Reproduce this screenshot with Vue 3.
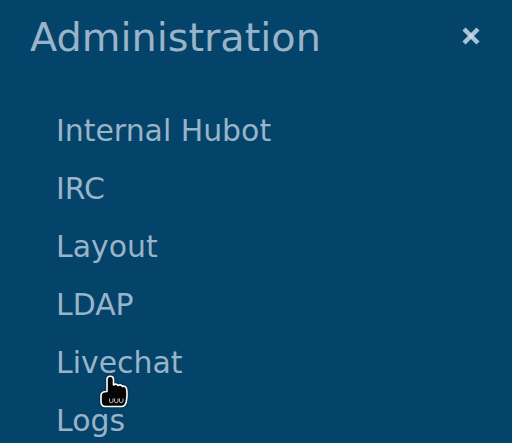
<template>
  <div class="panel">
    <header class="head">
      <h1 class="title">Administration</h1>
      <button class="close" aria-label="Close">
        <svg width="20" height="20" viewBox="0 0 20 20"><path d="M3 3 17 17M17 3 3 17" stroke="#a9c3d6" stroke-width="4.500" fill="none"/><circle cx="10" cy="10" r="2.500" fill="#c5d8e4"/></svg>
      </button>
    </header>
    <ul class="list">
      <li v-for="item in items" :key="item" class="item">{{ item }}</li>
    </ul>
    <svg class="cursor" width="40" height="40" viewBox="0 0 40 40">
      <path d="M11 9.500a3.250 3.250 0 0 1 6.500 0V15c1.500-1 3.500-.8 4.500.5 1.500-.8 3.500-.5 4.500 1 1.500-.8 3.500 0 4 2 .6 3 .6 9-.3 13.500-.6 2.500-2 4.500-4.500 4.500H9.500c-3.500 0-4.500-2-4.500-5v-6c0-2.500 2.500-4 6-4Z" fill="#050505" stroke="#fff" stroke-width="1.600" stroke-linejoin="round"/>
      <path d="M13.500 28.500v2.500a1.200 1.200 0 0 0 3.500 0v-2.500M18.500 28.500v2.500a1.200 1.200 0 0 0 3.500 0v-2.500M23.500 28.500v2.500a1.200 1.200 0 0 0 3.500 0v-2.500" stroke="#b5b5b5" stroke-width="1" fill="none"/>
    </svg>
  </div>
</template>

<script setup>
const items = ['Internal Hubot', 'IRC', 'Layout', 'LDAP', 'Livechat', 'Logs']
</script>

<style>
html, body { margin: 0; background: #04436a; overflow: hidden; }
</style>

<style scoped>
.panel {
  position: relative;
  width: 512px;
  height: 443px;
  overflow: hidden;
  background: #04436a;
  color: #99b4c8;
  font-family: "DejaVu Sans", sans-serif;
}
.head {
  display: flex;
  align-items: center;
  justify-content: space-between;
  padding: 13px 31px 0 30px;
  height: 48px;
}
.title {
  margin: 0;
  font-size: 39.750px;
  font-weight: 400;
  line-height: 48px;
}
.close {
  display: flex;
  padding: 0;
  border: 0;
  margin-bottom: 2px;
  background: none;
}
.list {
  list-style: none;
  margin: 0;
  padding: 41px 0 0 56px;
}
.item {
  font-size: 29.900px;
  line-height: 58px;
}
.cursor {
  position: absolute;
  left: 96px;
  top: 370px;
  filter: drop-shadow(0 0 1px rgba(0, 0, 0, 0.5));
}
</style>
